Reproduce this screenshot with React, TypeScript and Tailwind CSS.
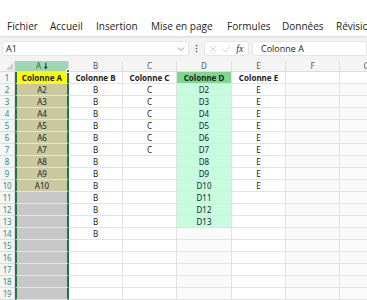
import React from "react";

const cols = ["A", "B", "C", "D", "E", "F", "G"];

const menu: [string, string][] = [
  ["Fichier", "w-[43px]"],
  ["Accueil", "w-[46px]"],
  ["Insertion", "w-[55px]"],
  ["Mise en page", "w-[76px]"],
  ["Formules", "w-[55px]"],
  ["Données", "w-[54px]"],
  ["Révision", "w-[40px]"],
];

const data: Record<number, string[]> = {};
for (let r = 1; r <= 19; r++) {
  const row = ["", "", "", "", "", "", ""];
  if (r === 1) {
    row[0] = "Colonne A";
    row[1] = "Colonne B";
    row[2] = "Colonne C";
    row[3] = "Colonne D";
    row[4] = "Colonne E";
  } else {
    if (r <= 10) row[0] = "A" + r;
    if (r <= 14) row[1] = "B";
    if (r <= 7) row[2] = "C";
    if (r <= 13) row[3] = "D" + r;
    if (r <= 10) row[4] = "E";
  }
  data[r] = row;
}

function cellClass(r: number, c: number) {
  if (c === 0) {
    if (r === 1) return "bg-[#ffff00] font-bold";
    if (r <= 10) return "bg-[#c9c89f]";
    return "bg-[#c8c8c8]";
  }
  if (c === 3) {
    if (r === 1) return "bg-[#7cd88e] font-bold";
    if (r <= 13) return "bg-[#c7fcdf]";
    return "bg-[#fafafa]";
  }
  if (r === 1) return "bg-white font-bold";
  if (c >= 5) return "bg-[#fafafa]";
  return "bg-white";
}

export default function App() {
  return (
    <div className="w-[367px] h-[300px] overflow-hidden bg-white font-['Open_Sans',sans-serif] text-[#222]">
      <div className="h-[36px] flex items-end pb-[2px] pl-[7px] text-[10px] whitespace-nowrap shadow-[0_1px_2px_rgba(0,0,0,0.12)] relative z-10">
        {menu.map(([t, w]) => (
          <span key={t} className={"shrink-0 " + w}>
            {t}
          </span>
        ))}
      </div>
      <div className="h-[25px] bg-[#f3f3f3] flex items-center pl-[2px] gap-[3px] text-[9px]">
        <div className="w-[187px] h-[15px] bg-white rounded-[3px] border border-[#e5e5e5] flex items-center justify-between px-[3px]">
          <span>A1</span>
          <svg width="8" height="8" viewBox="0 0 8 8"><path d="M1 2.5 L4 5.5 L7 2.5" stroke="#777" fill="none" strokeWidth="0.8" /></svg>
        </div>
        <span className="w-[9px] text-center text-[#555] font-bold">⋮</span>
        <div className="w-[45px] h-[15px] bg-white rounded-[3px] border border-[#e5e5e5] flex items-center justify-around px-[2px]">
          <svg width="8" height="8" viewBox="0 0 8 8"><path d="M1 1 L7 7 M7 1 L1 7" stroke="#c8c8c8" strokeWidth="0.8" /></svg>
          <svg width="9" height="8" viewBox="0 0 9 8"><path d="M1 4 L3.5 7 L8 1" stroke="#c8c8c8" fill="none" strokeWidth="0.8" /></svg>
          <span className="italic font-['Liberation_Serif',serif] text-[10px] text-[#333]">fx</span>
        </div>
        <div className="flex-1 h-[15px] bg-white rounded-l-[3px] border border-[#e5e5e5] flex items-center pl-[8px]">
          Colonne A
        </div>
      </div>
      <div className="grid grid-cols-[15px_54px_54px_54px_55px_54px_54px_54px] text-[8px] font-['Noto_Sans',sans-serif]">
        <div className="h-[11px] bg-[#f5f5f5] border-r border-b border-[#dcdcdc] relative">
          <svg className="absolute right-[1px] bottom-[1px]" width="7" height="7" viewBox="0 0 7 7"><path d="M7 0 L7 7 L0 7 Z" fill="#d0d0d0" /></svg>
        </div>
        {cols.map((c, i) => (
          <div
            key={c}
            className={
              "h-[11px] flex items-center justify-center border-r border-b border-[#dcdcdc] " +
              (i === 0 ? "bg-[#9fd6b4] text-[#2f6b4d]" : "bg-[#f5f5f5] text-[#555]")
            }
          >
            {c}
            {i === 0 && <span className="ml-[3px] text-[8px] font-bold text-[#222] leading-none">🠗</span>}
          </div>
        ))}
        {Object.keys(data).map((k) => {
          const r = Number(k);
          return (
            <React.Fragment key={r}>
              <div className="h-[12px] bg-[#f5f5f5] border-r border-b border-[#dcdcdc] text-[#3b8a72] flex items-center justify-center tracking-[-0.3px]">
                {r}
              </div>
              {data[r].map((v, c) => (
                <div
                  key={c}
                  className={
                    "h-[12px] flex items-center justify-center border-b border-[#e3e3e3] whitespace-nowrap relative " +
                    (c === 0 ? "border-x-2 border-x-[#217346] " : "border-r ") +
                    cellClass(r, c)
                  }
                >
                  {v}
                  {r === 1 && c === 0 && (
                    <span className="absolute right-[-3px] top-[-3px] w-[4px] h-[4px] bg-[#217346] border border-white" />
                  )}
                </div>
              ))}
            </React.Fragment>
          );
        })}
      </div>
    </div>
  );
}
